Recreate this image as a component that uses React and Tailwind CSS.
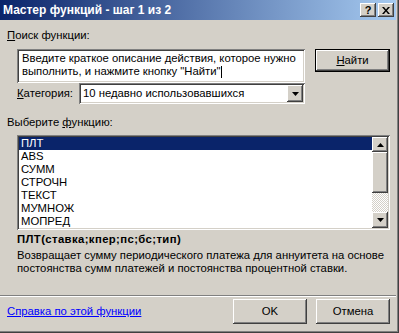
import React from "react";

const raised =
  "shadow-[inset_-1px_-1px_#404040,inset_1px_1px_#ffffff,inset_-2px_-2px_#808080,inset_2px_2px_#d4d0c8]";
const sunken =
  "shadow-[inset_1px_1px_#808080,inset_-1px_-1px_#ffffff,inset_2px_2px_#404040,inset_-2px_-2px_#d4d0c8]";

function Arrow({ up }) {
  return (
    <svg width="7" height="4" viewBox="0 0 7 4">
      {up ? <path d="M3.5 0 L7 4 L0 4 Z" fill="#000" /> : <path d="M0 0 L7 0 L3.5 4 Z" fill="#000" />}
    </svg>
  );
}

export default function App() {
  const items = ["ПЛТ", "ABS", "СУММ", "СТРОЧН", "ТЕКСТ", "МУМНОЖ", "МОПРЕД"];
  return (
    <div
      className="w-[399px] h-[333px] bg-[#d4d0c8] text-black text-[11.3px] leading-[13px] flex flex-col overflow-hidden shadow-[inset_-1px_-1px_#404040,inset_-2px_-2px_#808080]"
      style={{ fontFamily: '"Liberation Sans", Arial, sans-serif' }}
    >
      {/* Title bar */}
      <div className="h-[20px] mr-[3px] flex items-center bg-[linear-gradient(to_right,#0a246a,#a6caf0)] pl-[3px] pr-[2px]">
        <div className="flex-1 text-white font-bold text-[12px]">Мастер функций - шаг 1 из 2</div>
        <div className={`w-[16px] h-[14px] bg-[#d4d0c8] ${raised} flex items-center justify-center font-bold text-[11px] leading-none`}>?</div>
        <div className={`w-[16px] h-[14px] ml-[2px] bg-[#d4d0c8] ${raised} flex items-center justify-center`}>
          <svg width="8" height="7" viewBox="0 0 8 7">
            <path d="M0 0 L2 0 L4 2.5 L6 0 L8 0 L5 3.5 L8 7 L6 7 L4 4.5 L2 7 L0 7 L3 3.5 Z" fill="#000" />
          </svg>
        </div>
      </div>

      <div className="pl-[7px] mt-[9px]">
        <span className="underline">П</span>оиск функции:
      </div>

      <div className="flex mt-[7px] pl-[17px]">
        <div className={`w-[288px] h-[34px] bg-white ${sunken} px-[5px] pt-[3px]`}>
          <div>Введите краткое описание действия, которое нужно</div>
          <div>
            выполнить, и нажмите кнопку "Найти"<span className="inline-block w-px h-[12px] bg-black align-middle" />
          </div>
        </div>
        <div
          className={`ml-[10px] w-[75px] h-[23px] bg-[#d4d0c8] flex items-center justify-center shadow-[inset_0_0_0_1px_#000,inset_-2px_-2px_#404040,inset_2px_2px_#ffffff,inset_-3px_-3px_#808080]`}
        >
          <span className="underline">Н</span>айти
        </div>
      </div>

      <div className="flex items-center mt-[0px] pl-[17px] h-[21px]">
        <div className="w-[62px]">
          <span className="underline">К</span>атегория:
        </div>
        <div className={`w-[226px] h-[21px] bg-white ${sunken} flex items-center pl-[4px] pr-[2px]`}>
          <div className="flex-1">10 недавно использовавшихся</div>
          <div className={`w-[16px] h-[17px] bg-[#d4d0c8] ${raised} flex items-center justify-center`}>
            <Arrow />
          </div>
        </div>
      </div>

      <div className="pl-[7px] mt-[12px]">
        Выберите <span className="underline">ф</span>ункцию:
      </div>

      <div className="pl-[17px] mt-[6px]">
        <div className={`w-[373px] h-[95px] bg-white ${sunken} p-[2px] flex`}>
          <div className="flex-1">
            {items.map((it, i) => (
              <div
                key={it}
                className={`h-[13px] pl-[2px] ${i === 0 ? "bg-[#0a246a] text-white" : ""}`}
              >
                {it}
              </div>
            ))}
          </div>
          <div className="w-[16px] flex flex-col bg-[repeating-conic-gradient(#d4d0c8_0_25%,#ffffff_0_50%)] bg-[length:2px_2px]">
            <div className={`h-[15px] bg-[#d4d0c8] ${raised} flex items-center justify-center`}>
              <Arrow up />
            </div>
            <div className={`h-[41px] bg-[#d4d0c8] ${raised}`} />
            <div className="flex-1" />
            <div className={`h-[16px] bg-[#d4d0c8] ${raised} flex items-center justify-center`}>
              <Arrow />
            </div>
          </div>
        </div>
      </div>

      <div className="pl-[17px] mt-[3px] font-bold tracking-[0.4px]">ПЛТ(ставка;кпер;пс;бс;тип)</div>
      <div className="pl-[17px] mt-[3px]">
        <div>Возвращает сумму периодического платежа для аннуитета на основе</div>
        <div>постоянства сумм платежей и постоянства процентной ставки.</div>
      </div>

      <div className="mt-[20px] h-[2px] mr-[3px] border-t border-t-[#808080] border-b border-b-white" />

      <div className="flex items-center mt-[2px]">
        <div className="pl-[7px] flex-1 text-[#0000ff] underline">Справка по этой функции</div>
        <div className={`w-[74px] h-[25px] bg-[#d4d0c8] ${raised} flex items-center justify-center`}>OK</div>
        <div className={`w-[74px] h-[25px] ml-[9px] mr-[9px] bg-[#d4d0c8] ${raised} flex items-center justify-center`}>
          Отмена
        </div>
      </div>
    </div>
  );
}
